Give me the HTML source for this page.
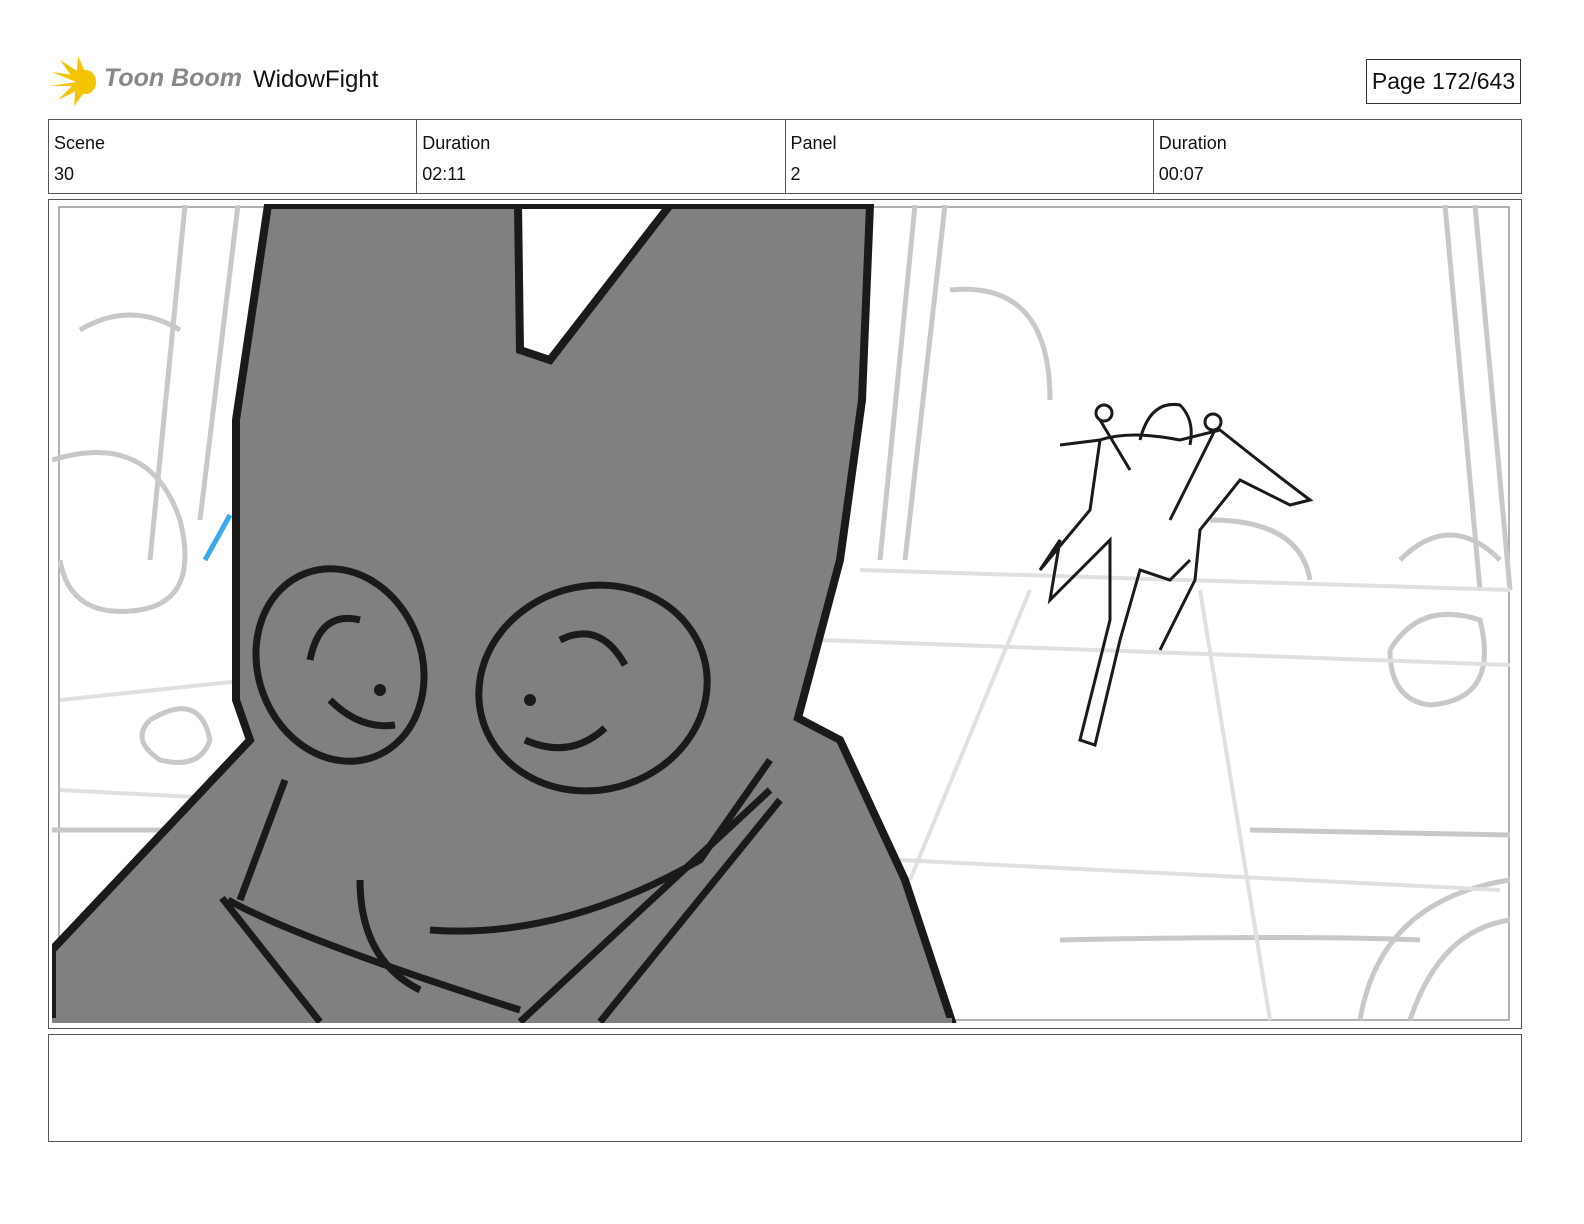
<!DOCTYPE html>
<html style="overflow:hidden"><head><meta charset="utf-8"><style>
html,body{margin:0;padding:0}
body{width:1584px;height:1224px;background:#fff;font-family:"Liberation Sans",sans-serif;position:relative;overflow:hidden}
.abs{position:absolute}
.hdr{left:48px;top:119px;width:1472px;height:73px;border:1px solid #555;display:flex}
.hdr div{flex:1;border-right:1px solid #555;font-size:18px;padding:8px 5px;line-height:31px;color:#111}
.hdr div:last-child{border-right:none}
</style></head><body>
<svg class="abs" style="left:50px;top:56px" width="52" height="52" viewBox="0 0 52 52">
<g fill="#f5c400"><path d="M26 26 L2 16 L30 20Z"/><path d="M26 26 L10 4 L32 18Z"/><path d="M26 26 L28 0 L36 18Z"/><path d="M26 26 L0 30 L30 30Z"/><path d="M26 26 L8 44 L32 32Z"/><path d="M26 26 L24 50 L36 34Z"/><ellipse cx="36" cy="26" rx="10" ry="12"/></g></svg>
<div class="abs" style="left:104px;top:64px;font-size:25px;font-weight:bold;font-style:italic;color:#888">Toon Boom</div>
<div class="abs" style="left:253px;top:66px;font-size:24px;color:#111">WidowFight</div>
<div class="abs" style="left:1366px;top:59px;width:153px;height:43px;border:1px solid #333;font-size:23px;line-height:43px;text-align:center;color:#111">Page 172/643</div>
<div class="abs hdr"><div>Scene<br>30</div><div>Duration<br>02:11</div><div>Panel<br>2</div><div>Duration<br>00:07</div></div>
<div class="abs" style="left:48px;top:199px;width:1472px;height:828px;border:1px solid #555"></div>
<svg class="abs" style="left:52px;top:204px" width="1464" height="819" viewBox="52 204 1464 819">
<rect x="59" y="207" width="1450" height="813" fill="none" stroke="#999" stroke-width="1.5"/>
<g fill="none" stroke="#c8c8c8" stroke-width="5">
<path d="M185 205 L150 560 M238 205 L200 520 M945 205 L905 560 M915 205 L880 560 M1445 205 L1480 590 M1475 205 L1510 590"/>
<path d="M80 330 Q130 300 180 330 M52 460 Q150 430 180 520 Q200 600 140 610 Q70 620 60 560"/>
<path d="M950 290 Q1050 280 1050 400 M1210 520 Q1300 520 1310 580 M1400 560 Q1450 510 1500 560"/>
<path d="M1390 650 Q1420 600 1480 620 Q1500 700 1430 705 Q1390 700 1390 650"/>
<path d="M150 720 Q200 690 210 740 Q200 770 160 760 Q130 740 150 720"/>
<path d="M1250 830 L1510 835 M1060 940 Q1300 935 1420 940"/>
<path d="M1360 1020 Q1380 900 1510 880 M1410 1020 Q1440 930 1510 920"/>
<path d="M52 830 L300 830"/>
</g>
<g fill="none" stroke="#e0e0e0" stroke-width="4">
<path d="M820 640 L1510 665 M900 860 L1500 890 M1030 590 L910 880 M1200 590 L1270 1020 M860 570 L1510 590 M60 700 L250 680 M60 790 L250 800"/>
</g>
<path d="M230 515 L205 560" stroke="#3aaaee" stroke-width="5"/>
<path d="M268 205 L870 205 L862 400 L840 560 L798 718 L840 740 L905 880 L952 1022 L52 1022 L52 950 L250 740 L236 700 L236 420 Z" fill="#808080" stroke="#1a1a1a" stroke-width="8"/>
<path d="M518 205 L520 350 L550 360 L670 205Z" fill="#fff" stroke="#1a1a1a" stroke-width="8"/>
<rect x="52" y="1018" width="900" height="6" fill="#808080"/>
<g fill="none" stroke="#1a1a1a" stroke-width="7">
<ellipse cx="340" cy="665" rx="82" ry="98" transform="rotate(-20 340 665)"/>
<ellipse cx="593" cy="688" rx="115" ry="102" transform="rotate(-15 593 688)"/>
<path d="M310 660 Q320 610 360 620 M330 700 Q360 730 395 725 M525 740 Q570 760 605 728 M560 640 Q600 620 625 665"/>
<path d="M285 780 L240 900 M222 898 L320 1022 M228 900 Q300 940 520 1010 M360 880 Q360 960 420 990 M430 930 Q560 940 700 860 L770 760 M520 1022 L770 790 M600 1022 L780 800"/>
</g>
<circle cx="380" cy="690" r="6" fill="#1a1a1a"/><circle cx="530" cy="700" r="6" fill="#1a1a1a"/>
<g fill="none" stroke="#1a1a1a" stroke-width="3">
<path d="M1060 445 L1100 440 Q1130 430 1180 440 L1220 430 Q1270 470 1310 500 L1290 505 L1240 480 L1200 530 L1195 580 L1160 650 M1100 440 L1090 510 L1040 570 L1060 540 L1050 600 L1110 540 L1110 620 L1080 740 L1095 745 L1120 640 L1140 570 L1170 580 L1190 560"/>
<path d="M1140 440 Q1150 400 1180 405 Q1195 420 1190 445 M1100 420 L1130 470 M1215 430 L1170 520"/>
<circle cx="1104" cy="413" r="8"/><circle cx="1213" cy="422" r="8"/>
</g>
</svg>
<div class="abs" style="left:48px;top:1034px;width:1472px;height:106px;border:1px solid #555"></div>
</body></html>
